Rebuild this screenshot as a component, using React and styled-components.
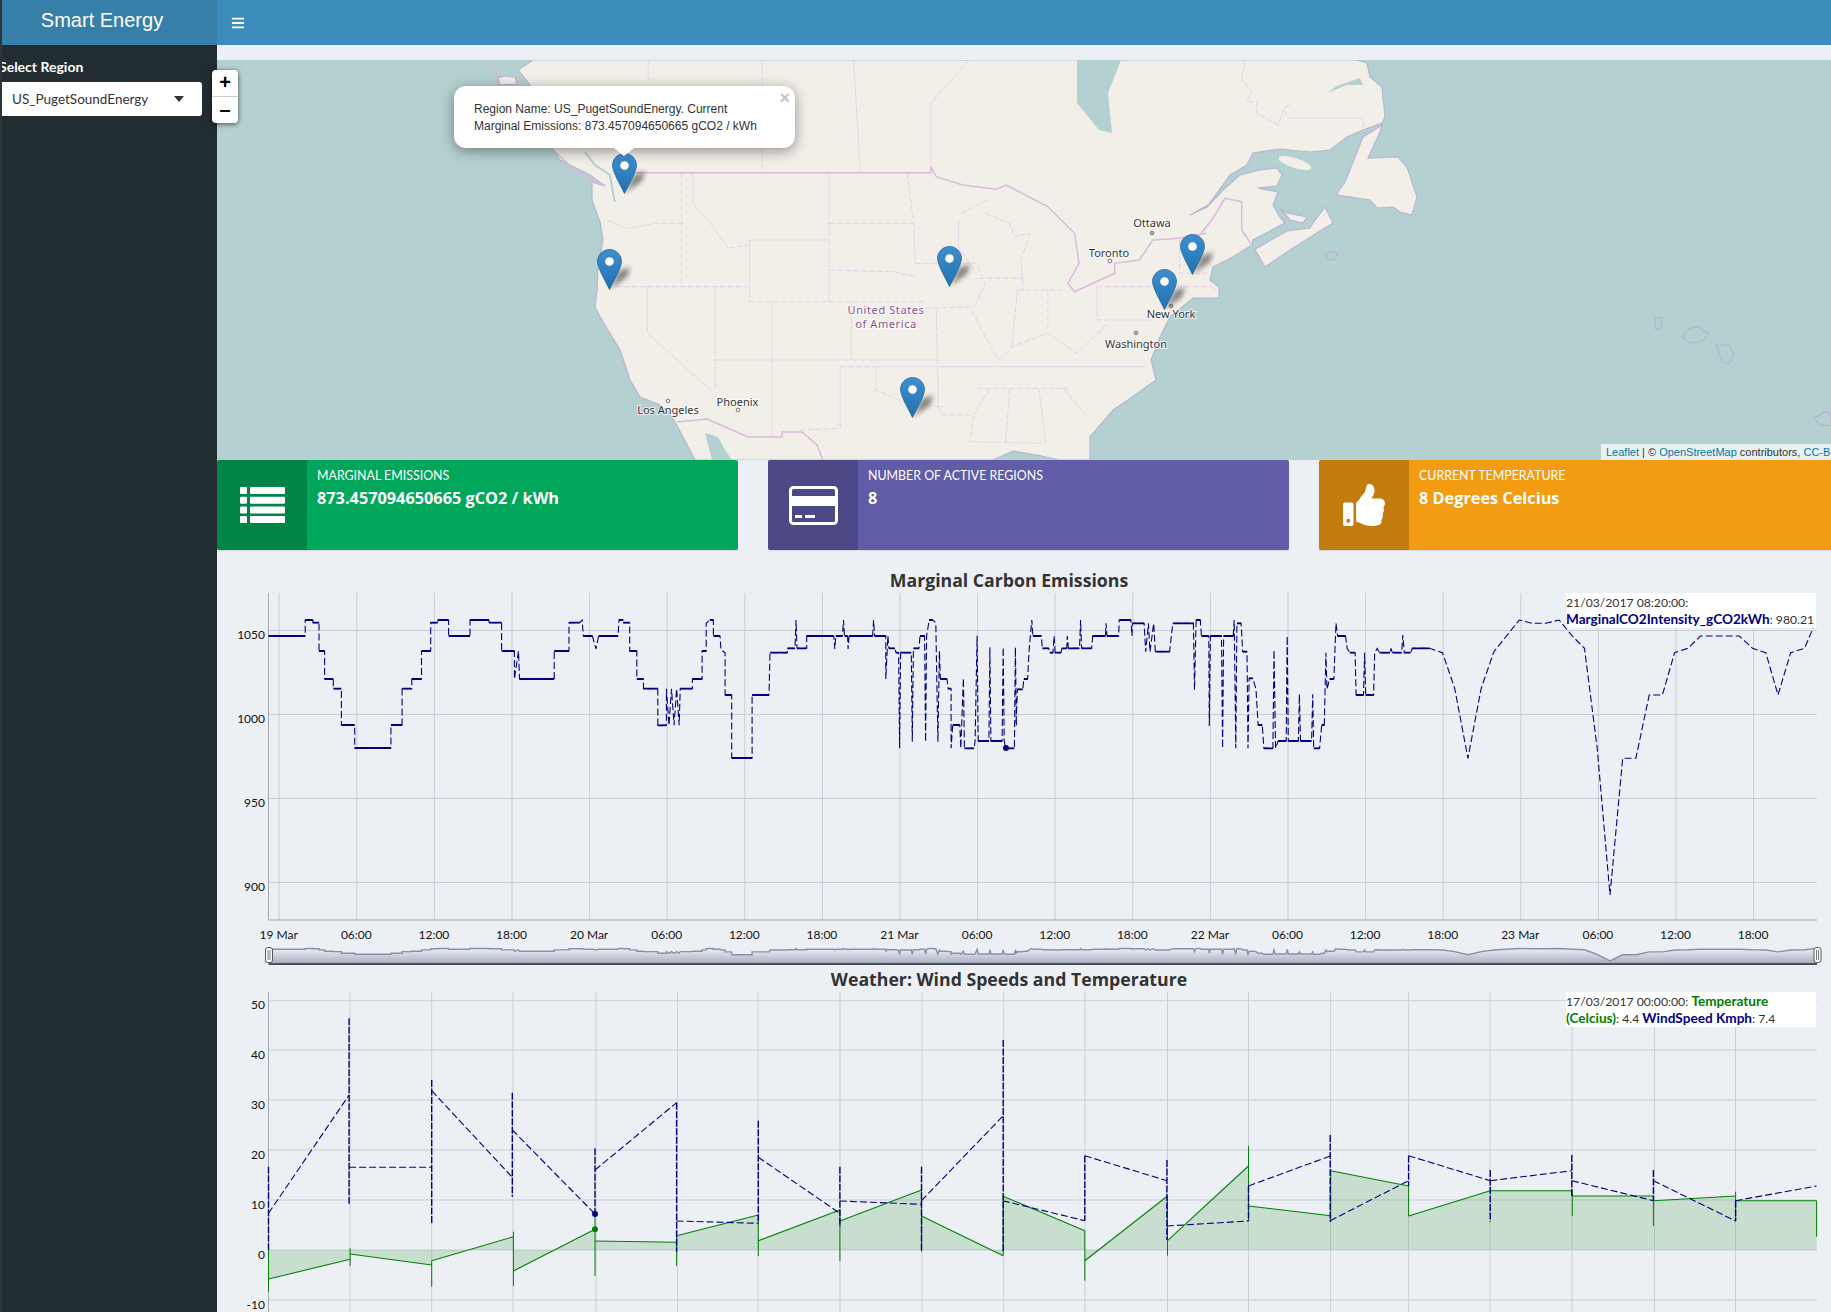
import React from 'react';
import styled, { createGlobalStyle } from 'styled-components';
import { FaBars, FaThumbsUp } from 'react-icons/fa';

const UI_FONT = '"Lato", "Noto Sans", sans-serif';
const HEAVY_FONT = '"Open Sans", "Lato", sans-serif';
const NAVY = '#000080';
const GREEN = '#008000';

// traced chart data, read off the screenshot in crop coordinates
const leftCrop = ([x, y]) => [220 + x / 1.96, 570 + y / 3];
const rightCrop = ([x, y]) => [1000 + x / 1.887, 600 + y / 3];
const weatherLeft = (x, y) => [220 + x / 1.96, 950 + y / 3];
const weatherRight = (x, y) => [1000 + x / 1.887, 950 + y / 3];
const mapCrop = ([x, y]) => [550 + x / 2.24, 60 + y / 3];
const eastCrop = ([x, y]) => [1100 + x / 2.145, 60 + y / 3];
const gulfCrop = ([x, y]) => [1190 + x / 3, 60 + y / 3];

const emissionsA = [[95,198],[167,198],[167,150],[182,150],[182,158],[194,158],[194,243],[205,243],[205,327],[222,327],[222,356],[238,356],[238,465],[264,465],[264,534],[335,534],[335,465],[357,465],[357,356],[376,356],[376,327],[395,327],[395,243],[413,243],[413,158],[427,158],[427,150],[448,150],[448,198],[490,198],[490,150],[527,150],[527,158],[552,158],[552,243],[577,243],[577,327],[585,243],[587,327],[655,327],[655,243],[684,243],[684,158],[705,158],[710,150],[712,198],[730,198],[737,237],[742,198],[780,198],[782,150],[790,150],[790,158],[803,158],[803,243],[817,243],[817,327],[830,327],[830,356],[858,356],[858,466],[875,466],[875,356],[880,466],[885,356],[890,466],[895,356],[900,466],[902,356],[926,356],[926,327],[945,327],[945,243],[953,243],[953,160],[960,150],[967,150],[967,198],[980,198],[982,240],[990,248],[990,375],[1003,375],[1003,564],[1043,564],[1043,375],[1076,375],[1078,248],[1112,248],[1112,235],[1127,235],[1129,150],[1131,235],[1150,235],[1150,198],[1203,198],[1205,237],[1207,198],[1220,198],[1222,150],[1224,198],[1230,198],[1231,237],[1233,198],[1279,198],[1281,150],[1283,198],[1305,198],[1305,327],[1309,198],[1311,235],[1323,235],[1325,248],[1330,248],[1332,535],[1334,248],[1355,248],[1357,515],[1359,235],[1370,235],[1372,198],[1381,198],[1383,515],[1385,198],[1390,150],[1397,150],[1403,158],[1407,515],[1410,243],[1412,327],[1425,327],[1427,356],[1433,356],[1433,535],[1436,465],[1450,465],[1452,535],[1457,325],[1459,535],[1478,535],[1480,513],[1484,197],[1486,513],[1507,513],[1509,232],[1511,513],[1533,513],[1535,232],[1537,513],[1540,535],[1557,535],[1559,232],[1561,465]];
const emissionsB = [[30,375],[33,268],[43,268],[45,237],[52,237],[55,150],[60,60],[62,108],[78,108],[80,145],[92,145],[94,158],[100,158],[102,108],[104,158],[115,158],[117,145],[126,145],[127,108],[129,145],[150,145],[152,60],[154,145],[173,145],[175,108],[199,108],[200,70],[202,108],[224,108],[225,60],[247,60],[249,108],[250,70],[272,70],[275,155],[280,70],[283,155],[290,70],[293,155],[320,155],[326,70],[365,70],[367,270],[370,60],[378,60],[380,108],[394,108],[395,378],[397,108],[418,108],[420,445],[422,108],[440,108],[442,60],[445,445],[447,70],[455,70],[458,155],[466,155],[468,445],[470,235],[477,235],[483,268],[487,375],[495,375],[498,445],[515,445],[517,150],[520,445],[525,423],[540,423],[542,108],[544,423],[563,423],[565,283],[567,423],[588,423],[590,283],[592,445],[603,445],[607,375],[612,375],[615,158],[617,268],[622,237],[630,237],[632,155],[634,70],[637,108],[652,108],[655,145],[660,158],[670,158],[672,285],[686,285],[688,158],[690,285],[705,285],[707,158],[712,145],[716,158],[736,158],[738,145],[740,158],[758,158],[760,105],[763,158],[775,158],[778,145],[810,145],[835,158],[858,265],[883,475],[908,265],[932,155],[980,60],[1004,70],[1030,70],[1055,60],[1080,108],[1103,145],[1127,445],[1151,885],[1175,475],[1200,475],[1225,285],[1250,285],[1273,158],[1298,145],[1322,108],[1395,108],[1420,145],[1445,158],[1468,285],[1492,158],[1518,145],[1541,60]];
const emissions = [...emissionsA.map(leftCrop), ...emissionsB.map(rightCrop)];

const toPath = (pts) => pts.map(([x, y], i) => `${i ? 'L' : 'M'}${x.toFixed(1)} ${y.toFixed(1)}`).join('');
const flatPath = emissions
  .map((p, i) => (i && p[1] === emissions[i - 1][1] && p[0] < 1450 ? `M${emissions[i - 1][0].toFixed(1)} ${p[1].toFixed(1)}L${p[0].toFixed(1)} ${p[1].toFixed(1)}` : ''))
  .join('');
const miniLine = emissions.map(([x, y]) => [x, 949 + (y - 630) * 0.045]);

const tempLeft = [[95,987,255,928],[255,912,415,945],[415,932,575,860],[575,963,735,838],[735,873,895,877],[895,857,1055,795],[1055,872,1215,780],[1215,813,1375,720],[1375,798,1535,917]];
const tempRight = [[5,738,160,842],[160,932,316,738],[316,872,469,648],[469,768,624,797],[624,662,771,708],[771,798,925,722],[925,722,1080,722],[1080,738,1233,738],[1233,752,1388,738],[1388,752,1541,752]];
const tempBarsLeft = [[95,901,1025],[255,895,948],[415,932,1010],[575,845,1008],[735,800,978],[895,860,948],[1055,795,918],[1215,780,933],[1375,720,905],[1535,738,917]];
const tempBarsRight = [[160,842,992],[316,738,917],[469,588,810],[624,662,815],[771,708,798],[1080,722,798],[1233,738,828],[1388,725,815],[1541,752,860]];
const windLeft = [[95,790,253,435],[253,652,415,652],[415,422,573,682],[573,540,735,792],[735,660,895,458],[895,813,1055,820],[1055,622,1215,790],[1215,753,1375,763],[1375,752,1535,497]];
const windRight = [[5,752,160,812],[160,617,315,692],[315,828,469,813],[469,708,623,618],[623,812,771,692],[771,617,925,692],[925,692,1079,662],[1079,692,1233,752],[1233,692,1388,813],[1388,752,1541,708]];
const windBarsLeft = [[95,650,900],[253,205,765],[415,390,820],[573,428,740],[735,595,792],[895,458,905],[1055,512,820],[1215,650,830],[1375,650,905],[1535,270,905]];
const windBarsRight = [[160,617,812],[315,630,870],[469,708,813],[623,555,815],[771,617,708],[925,660,815],[1079,615,738],[1233,660,752],[1388,752,813]];

const segments = (rows, conv) => rows.map(([a, b, c, d]) => [conv(a, b), conv(c, d)]);
const bars = (rows, conv) => rows.map(([x, a, b]) => [conv(x, a), conv(x, b)]);
const tempSegments = [...segments(tempLeft, weatherLeft), ...segments(tempRight, weatherRight)];
const windSegments = [...segments(windLeft, weatherLeft), ...segments(windRight, weatherRight)];
const tempBars = [...bars(tempBarsLeft, weatherLeft), ...bars(tempBarsRight, weatherRight)];
const windBars = [...bars(windBarsLeft, weatherLeft), ...bars(windBarsRight, weatherRight)];
const tempFill = tempSegments.map(([a, b]) => `M${a[0]} 1250L${a[0]} ${a[1]}L${b[0]} ${b[1]}L${b[0]} 1250Z`).join('');

const xLabels = ['19 Mar', '06:00', '12:00', '18:00', '20 Mar', '06:00', '12:00', '18:00', '21 Mar', '06:00', '12:00', '18:00', '22 Mar', '06:00', '12:00', '18:00', '23 Mar', '06:00', '12:00', '18:00'];
const weatherGrid = [350, 431.7, 513, 596, 677.6, 758, 840, 922, 1003.7, 1085, 1167.5, 1248.5, 1330.7, 1408.6, 1490, 1572, 1654.5, 1735.5];

// map geometry, page coordinates
const land = [[533,60],[518,70],[530,85],[540,120],[552,148],[560,160],[590,175],[605,186],[592,182],[592,200],[600,222],[603,240],[598,265],[597,290],[595,307],[603,322],[620,350],[630,380],[640,397],[660,405],[668,412],[675,422],[683,437],[695,460],[993,460],[1013,451],[1037,455],[1060,460],[1090,460],[1090,437],[1113,410],[1128,400],[1156,380],[1151,360],[1160,337],[1170,317],[1193,298],[1219,298],[1219,287],[1210,280],[1213,267],[1233,257],[1252,245],[1253,240],[1285,223],[1280,217],[1273,205],[1278,192],[1258,188],[1277,186],[1282,175],[1277,168],[1260,170],[1240,175],[1223,190],[1207,207],[1190,215],[1208,205],[1217,193],[1230,175],[1247,165],[1253,153],[1280,149],[1310,152],[1330,150],[1347,137],[1363,130],[1382,123],[1385,117],[1382,87],[1370,77],[1367,63],[1357,60]];
const newfoundland = [[1338,192],[1345,182],[1363,137],[1382,125],[1380,132],[1368,158],[1398,157],[1407,167],[1417,197],[1412,215],[1400,212],[1393,207],[1377,208],[1370,200],[1337,195]];
const novaScotia = [[1255,250],[1265,267],[1290,250],[1333,223],[1325,207],[1313,223],[1310,228],[1287,231],[1257,248]];
const princeEdward = [[1280,208],[1287,213],[1307,217],[1303,223],[1290,220]];
const smallIsland = [[498,78],[505,76],[515,77],[517,84],[500,85]];
const jamesBay = [[1077,60],[1121,60],[1108,93],[1112,133],[1099,130],[1077,103]];
const hamiltonInlet = [[1327,93],[1337,86],[1360,78],[1363,85],[1347,85]];
const californiaGulf = [[705,433],[718,437],[725,450],[732,460],[712,460]];
const georgiaStrait = [[585,152],[595,165],[610,175],[613,193],[615,202]];
const borders = [
  [[190,338],[853,338],[853,320],[865,350],[925,375],[1000,388],[1022,375],[1115,440],[1175,520],[1185,610],[1160,670],[1175,695],[1265,640],[1265,610],[1320,600],[1350,540],[1410,535],[1470,520]].map(mapCrop),
  [[677,422],[707,419],[748,437],[782,437],[782,432],[802,432],[817,445],[823,460]],
  [[30,525],[65,480],[105,415],[155,425],[155,510],[185,555]].map(gulfCrop),
  [[490,60],[490,67],[500,70],[495,80],[498,86]],
  [[553,150],[575,170],[605,186]],
];
const stateLines = [
  [[295,340],[295,680]],[[320,340],[320,430],[360,490],[385,540],[400,565],[445,555]],[[130,480],[170,505],[240,490],[300,490]],[[130,680],[445,680]],[[218,680],[218,820],[360,990]],[[370,680],[370,990]],[[497,725],[497,1130]],[[447,540],[625,540],[625,725],[447,725],[447,540]],[[625,340],[625,540]],[[625,490],[815,490]],[[800,340],[815,490],[818,610]],[[625,630],[770,635],[820,650]],[[625,725],[835,725]],[[675,725],[675,900]],[[370,900],[865,900]],[[650,920],[650,1105],[560,1110]],[[650,920],[730,920],[730,990],[800,1030],[880,1040]],[[730,920],[1340,920]],[[865,750],[870,1040],[880,1065],[950,1065]],[[818,610],[955,610],[975,670],[950,740],[840,745]],[[960,655],[1060,655]],[[915,480],[915,560],[955,640]],[[920,460],[980,420]],[[975,460],[1030,490],[1040,530],[1075,520],[1055,600],[1060,690]],[[1047,690],[1035,860]],[[945,750],[975,830],[1005,900]],[[1047,690],[1155,690]],[[1115,690],[1115,810]],[[1225,680],[1480,680]],[[1225,680],[1225,780],[1350,780]],[[1005,900],[1035,860],[1115,820],[1180,880],[1250,790]],[[955,985],[1160,985]],[[1030,985],[1020,1150]],[[1095,985],[1110,1150]],[[1150,985],[1210,1080]],[[945,1145],[1110,1150]],[[985,985],[950,1065],[940,1145]],[[220,0],[220,60]],[[475,0],[475,340]],[[680,0],[695,340]],[[940,0],[853,130],[853,320]],[[1410,540],[1410,640],[1470,640]],[[1480,680],[1490,690]],
].map((pts) => pts.map(mapCrop));
const quebecLines = [[[165,0],[155,60],[185,95],[170,125],[200,125],[200,160],[265,195],[280,150],[300,130],[280,150],[295,175],[520,175],[520,210]]].map((pts) => pts.map(gulfCrop));
const islands = [
  [[1190,775],[1205,772],[1205,800],[1192,808]],
  [[1248,830],[1265,805],[1280,800],[1305,820],[1295,840],[1265,850]],
  [[1322,855],[1350,855],[1360,885],[1348,912],[1335,905]],
  [[1532,1075],[1555,1055],[1568,1060],[1568,1098],[1545,1095]],
  [[484,585],[497,575],[510,578],[505,597],[490,600]],
];
const pins = [[624.5, 194], [609, 290], [949.5, 287], [912.5, 418], [1164, 310], [1192, 275]];
const cities = [
  { name: 'Ottawa', x: 1152, y: 227, dot: [1152, 233], ring: true },
  { name: 'Toronto', x: 1109, y: 257, dot: [1110, 261] },
  { name: 'New York', x: 1171, y: 318, dot: [1171, 306], ring: true },
  { name: 'Washington', x: 1136, y: 348, dot: [1136, 333], ring: true },
  { name: 'Phoenix', x: 737.5, y: 406, dot: [738, 410] },
  { name: 'Los Angeles', x: 668, y: 414, dot: [668, 401] },
];

const GlobalStyle = createGlobalStyle`
  html, body {
    margin: 0;
    height: 1312px;
    overflow: hidden;
    background: #ecf0f5;
    font-family: ${UI_FONT};
    color: #333;
  }
`;

const Page = styled.div`
  width: 1840px;
  height: 1312px;
  display: flex;
  flex-direction: column;
  overflow: hidden;
  border-left: 2px solid #2f3437;
  box-sizing: border-box;
`;

const TopBar = styled.header`
  height: 45px;
  flex: none;
  display: flex;
  background: #3c8dbc;
`;

const Logo = styled.div`
  width: 215px;
  padding-right: 15px;
  box-sizing: border-box;
  background: #367fa9;
  color: #fff;
  font: 20px/41px "Liberation Sans", Arial, sans-serif;
  text-align: center;
`;

const MenuToggle = styled.div`
  padding-left: 14px;
  display: flex;
  align-items: center;
  color: #fff;
  font-size: 14px;
`;

const Body = styled.div`
  flex: 1;
  display: flex;
  min-height: 0;
`;

const Sidebar = styled.aside`
  width: 215px;
  flex: none;
  background: #222d32;
  overflow: hidden;
  padding-top: 13px;
  box-sizing: border-box;
`;

const FieldLabel = styled.div`
  margin-left: -3px;
  color: #fff;
  font-size: 14px;
  font-weight: 700;
  line-height: 18px;
`;

const SelectBox = styled.div`
  width: 200px;
  height: 34px;
  margin-top: 6px;
  box-sizing: border-box;
  padding: 0 10px;
  display: flex;
  align-items: center;
  justify-content: space-between;
  background: #fff;
  border-radius: 0 3px 3px 0;
  color: #333;
  font-size: 13.5px;
`;

const Caret = styled.span`
  margin-right: 8px;
  border: 5px solid transparent;
  border-top: 6px solid #333;
  border-bottom: 0;
`;

const Content = styled.main`
  flex: 1;
  min-width: 0;
  padding-top: 15px;
`;

const MapPanel = styled.section`
  position: relative;
  height: 400px;
  background: #b5d0d0;
`;

const MapCanvas = styled.svg`
  display: block;
  width: 100%;
  height: 100%;
`;

const CityName = styled.text`
  font: 11px "Noto Sans", sans-serif;
  fill: #333;
  stroke: #fff;
  stroke-opacity: 0.75;
  stroke-width: 2px;
  paint-order: stroke;
  text-anchor: middle;
`;

const CountryName = styled(CityName)`
  fill: #8d4f8d;
  letter-spacing: 0.6px;
`;

const ZoomControl = styled.div`
  position: absolute;
  left: -5px;
  top: 10px;
  width: 26px;
  border-radius: 4px;
  background: #fff;
  box-shadow: 0 1px 5px rgba(0, 0, 0, 0.65);
  overflow: hidden;
`;

const ZoomButton = styled.div`
  height: 26px;
  text-align: center;
  font: bold 20px/25px "Liberation Sans", Arial, sans-serif;
  color: #000;
  & + & {
    border-top: 1px solid #ccc;
  }
`;

const Pin = styled.svg`
  position: absolute;
  left: ${(p) => p.$x - 12.5 - 217}px;
  top: ${(p) => p.$y - 41 - 60}px;
  width: 25px;
  height: 41px;
  overflow: visible;
`;

const Popup = styled.div`
  position: absolute;
  left: 237px;
  top: 26px;
  width: 341px;
  height: 62px;
  box-sizing: border-box;
  padding: 15px 20px;
  background: #fff;
  border-radius: 12px;
  box-shadow: 0 3px 14px rgba(0, 0, 0, 0.4);
  font: 12px/17px "Liberation Sans", Arial, sans-serif;
  color: #333;
  &::after {
    content: '';
    position: absolute;
    left: 160px;
    bottom: -8px;
    border: 10px solid transparent;
    border-top: 8px solid #fff;
    border-bottom: 0;
  }
`;

const PopupClose = styled.span`
  position: absolute;
  right: 5px;
  top: 2px;
  color: #c3c3c3;
  font: bold 18px/20px Tahoma, "Liberation Sans", sans-serif;
`;

const Attribution = styled.div`
  position: absolute;
  right: -20px;
  bottom: 0;
  padding: 0 5px;
  background: rgba(255, 255, 255, 0.7);
  font: 11px/16px "Liberation Sans", Arial, sans-serif;
  color: #333;
  a {
    color: #0078a8;
    text-decoration: none;
  }
`;

const InfoRow = styled.section`
  display: flex;
  gap: 30px;
`;

const InfoBox = styled.div`
  width: 521px;
  height: 90px;
  display: flex;
  color: #fff;
  background: ${(p) => p.$color};
  border-radius: 2px;
  box-shadow: 0 1px 1px rgba(0, 0, 0, 0.1);
`;

const InfoIcon = styled.div`
  width: 90px;
  flex: none;
  display: flex;
  align-items: center;
  justify-content: center;
  background: rgba(0, 0, 0, 0.2);
  border-radius: 2px 0 0 2px;
  font-size: 42px;
  svg {
    display: block;
  }
`;

const InfoText = styled.div`
  padding: 6px 10px;
`;

const InfoLabel = styled.div`
  font-size: 12.4px;
  line-height: 20px;
  text-transform: uppercase;
`;

const InfoValue = styled.div`
  font-family: ${HEAVY_FONT};
  font-size: 16.3px;
  font-weight: 700;
  line-height: 25px;
`;

const ChartBlock = styled.section`
  position: relative;
`;

const ChartTitle = styled.h2`
  width: 1584px;
  margin: 0;
  padding-top: ${(p) => p.$top}px;
  text-align: center;
  font-family: ${HEAVY_FONT};
  font-size: 17.7px;
  font-weight: 700;
  line-height: ${(p) => p.$line}px;
  color: #333;
`;

const ChartCanvas = styled.svg`
  display: block;
  width: 1623px;
  height: ${(p) => p.$height}px;
`;

const TickLabel = styled.text`
  font: 12px ${UI_FONT};
  fill: #111;
  text-anchor: ${(p) => p.$anchor || 'middle'};
`;

const Legend = styled.div`
  position: absolute;
  left: 1349px;
  top: ${(p) => p.$top}px;
  width: 250px;
  height: 35px;
  overflow: hidden;
  box-sizing: border-box;
  padding-top: 1px;
  background: #fff;
  font-size: 12.2px;
  line-height: 17px;
  color: #333;
`;

const Series = styled.b`
  color: ${(p) => p.$color};
  font-size: 13.6px;
`;

const ListIcon = () => (
  <svg width="45" height="36" viewBox="0 0 45 36" fill="#fff">
    {[0, 9.7, 19.4, 29].map((y) => (
      <g key={y}>
        <rect x="0" y={y} width="7" height="7" rx="1" />
        <rect x="10" y={y} width="35" height="7" rx="1" />
      </g>
    ))}
  </svg>
);

const CardIcon = () => (
  <svg width="49" height="39" viewBox="0 0 49 39" fill="#fff">
    <rect x="1.5" y="1.5" width="46" height="36" rx="3" fill="none" stroke="#fff" strokeWidth="3" />
    <rect x="2" y="10" width="45" height="10" />
    <rect x="6" y="29" width="7" height="3" />
    <rect x="16" y="29" width="10" height="3" />
  </svg>
);

const MapPin = ({ x, y }) => (
  <Pin $x={x} $y={y} viewBox="0 0 25 41">
    <defs>
      <linearGradient id="pinFill" x1="0" y1="0" x2="0" y2="1">
        <stop offset="0" stopColor="#3f8fce" />
        <stop offset="1" stopColor="#2170b0" />
      </linearGradient>
      <filter id="pinShadow" x="-60%" y="-60%" width="220%" height="220%">
        <feGaussianBlur stdDeviation="2.5" />
      </filter>
    </defs>
    <path d="M13 40L22 22L33 18L30 28Z" fill="#000" opacity="0.45" filter="url(#pinShadow)" />
    <path
      d="M12.5 .5C5.9 .5 .5 5.9 .5 12.5C.5 19 9 33 12.5 40.5C16 33 24.5 19 24.5 12.5C24.5 5.9 19.1 .5 12.5 .5Z"
      fill="url(#pinFill)"
      stroke="#2a6a9c"
      strokeWidth="0.8"
    />
    <circle cx="12.5" cy="12.5" r="4.3" fill="#fff" />
  </Pin>
);

const MapDrawing = () => (
  <MapCanvas viewBox="217 60 1623 400">
    <path d={`${toPath(land)}Z`} fill="#f2efe9" stroke="#b4b7d0" strokeWidth="1.2" />
    {[newfoundland, novaScotia, princeEdward, smallIsland].map((pts, i) => (
      <path key={i} d={`${toPath(pts)}Z`} fill="#f2efe9" stroke="#bcb4d4" strokeWidth="1.2" />
    ))}
    <ellipse cx="1295" cy="163" rx="17" ry="5" transform="rotate(18 1295 163)" fill="#f2efe9" />
    {[jamesBay, hamiltonInlet, californiaGulf].map((pts, i) => (
      <path key={i} d={`${toPath(pts)}Z`} fill="#b5d0d0" />
    ))}
    <path d={toPath(georgiaStrait)} fill="none" stroke="#b5d0d0" strokeWidth="2" />
    {islands.map((pts, i) => (
      <path key={i} d={`${toPath(pts.map(eastCrop))}Z`} fill="#b5d0d0" stroke="#b9b3d2" strokeWidth="1.2" />
    ))}
    {[...stateLines, ...quebecLines].map((pts, i) => (
      <path key={i} d={toPath(pts)} fill="none" stroke="#e8cfe8" strokeWidth="1" strokeDasharray="6 2" />
    ))}
    {borders.map((pts, i) => (
      <path key={i} d={toPath(pts)} fill="none" stroke="#dcb9dc" strokeWidth="1.5" />
    ))}
    {cities.map((c) => (
      <g key={c.name}>
        <circle cx={c.dot[0]} cy={c.dot[1]} r="1.8" fill="#fff" stroke="#555" strokeWidth="0.8" />
        {c.ring && <circle cx={c.dot[0]} cy={c.dot[1]} r="0.7" fill="#333" />}
        <CityName x={c.x} y={c.y}>{c.name}</CityName>
      </g>
    ))}
    <CountryName x="886" y="314">United States</CountryName>
    <CountryName x="886" y="328">of America</CountryName>
  </MapCanvas>
);

const EmissionsChart = () => (
  <ChartCanvas $height={378} viewBox="217 590 1623 378">
    <defs>
      <linearGradient id="rangeFill" x1="0" y1="0" x2="0" y2="1">
        <stop offset="0" stopColor="#ecf0f5" />
        <stop offset="1" stopColor="#aab0c2" />
      </linearGradient>
    </defs>
    {[630.5, 714.5, 798.5, 882.5].map((y) => (
      <line key={y} x1="268.5" x2="1817" y1={y} y2={y} stroke="#c9ced6" />
    ))}
    {xLabels.map((label, i) => (
      <line key={i} x1={279.2 + i * 77.6} x2={279.2 + i * 77.6} y1="593" y2="920" stroke="#c9ced6" />
    ))}
    <path d="M268.5 593V920H1817" fill="none" stroke="#a5a9b1" />
    <path d={toPath(emissions)} fill="none" stroke={NAVY} strokeWidth="1.1" strokeDasharray="7 3" />
    <path d={flatPath} fill="none" stroke={NAVY} strokeWidth="1.8" />
    <circle cx="1006" cy="748" r="3" fill={NAVY} />
    {[['1050', 638.5], ['1000', 722.5], ['950', 806.5], ['900', 890.5]].map(([label, y]) => (
      <TickLabel key={label} x="265" y={y} $anchor="end">{label}</TickLabel>
    ))}
    {xLabels.map((label, i) => (
      <TickLabel key={i} x={278.7 + i * 77.6} y="939">{label}</TickLabel>
    ))}
    <path d={`${toPath(miniLine)}L1817 963L268.5 963Z`} fill="url(#rangeFill)" />
    <path d={toPath(miniLine)} fill="none" stroke="#8591ab" strokeWidth="1.4" />
    <rect x="268.5" y="963" width="1548.5" height="2" fill="#4a4f5a" />
    {[265, 1813.5].map((x) => (
      <g key={x}>
        <rect x={x + 0.5} y="947.5" width="7" height="15" rx="2.5" fill="#fff" stroke="#555" />
        <path d={`M${x + 3} 950V960M${x + 5} 950V960`} stroke="#777" />
      </g>
    ))}
  </ChartCanvas>
);

const WeatherChart = () => (
  <ChartCanvas $height={322} viewBox="217 990 1623 322">
    {[1000.7, 1050, 1100, 1150, 1200, 1250, 1300].map((y) => (
      <line key={y} x1="268.5" x2="1817" y1={y} y2={y} stroke="#c9ced6" />
    ))}
    {weatherGrid.map((x) => (
      <line key={x} x1={x} x2={x} y1="992" y2="1312" stroke="#c9ced6" />
    ))}
    <line x1="268.5" x2="268.5" y1="992" y2="1312" stroke="#a5a9b1" />
    <path d={tempFill} fill={GREEN} opacity="0.15" />
    {tempSegments.map((s, i) => (
      <path key={i} d={toPath(s)} stroke={GREEN} strokeWidth="1.1" fill="none" />
    ))}
    {tempBars.map((s, i) => (
      <path key={i} d={toPath(s)} stroke={GREEN} strokeWidth="1" fill="none" />
    ))}
    {windSegments.map((s, i) => (
      <path key={i} d={toPath(s)} stroke={NAVY} strokeWidth="1.1" strokeDasharray="7 3" fill="none" />
    ))}
    {windBars.map((s, i) => (
      <path key={i} d={toPath(s)} stroke={NAVY} strokeWidth="1.4" strokeDasharray="7 1.5" fill="none" />
    ))}
    <circle cx="595" cy="1214" r="3" fill={NAVY} />
    <circle cx="595" cy="1229.3" r="3" fill={GREEN} />
    {[['50', 1008.5], ['40', 1058.5], ['30', 1108.5], ['20', 1158.5], ['10', 1208.5], ['0', 1258.5], ['-10', 1308.5]].map(([label, y]) => (
      <TickLabel key={label} x="265" y={y} $anchor="end">{label}</TickLabel>
    ))}
  </ChartCanvas>
);

export default function App() {
  return (
    <Page>
      <GlobalStyle />
      <TopBar>
        <Logo>Smart Energy</Logo>
        <MenuToggle><FaBars /></MenuToggle>
      </TopBar>
      <Body>
        <Sidebar>
          <FieldLabel>Select Region</FieldLabel>
          <SelectBox>US_PugetSoundEnergy<Caret /></SelectBox>
        </Sidebar>
        <Content>
          <MapPanel>
            <MapDrawing />
            {pins.map(([x, y]) => <MapPin key={x} x={x} y={y} />)}
            <ZoomControl>
              <ZoomButton>+</ZoomButton>
              <ZoomButton>–</ZoomButton>
            </ZoomControl>
            <Popup>
              Region Name: US_PugetSoundEnergy. Current<br />
              Marginal Emissions: 873.457094650665 gCO2 / kWh
              <PopupClose>×</PopupClose>
            </Popup>
            <Attribution>
              <a href="#leaflet">Leaflet</a> | © <a href="#osm">OpenStreetMap</a> contributors, <a href="#cc">CC-BY-SA</a>
            </Attribution>
          </MapPanel>
          <InfoRow>
            <InfoBox $color="#00a65a">
              <InfoIcon><ListIcon /></InfoIcon>
              <InfoText>
                <InfoLabel>Marginal Emissions</InfoLabel>
                <InfoValue>873.457094650665 gCO2 / kWh</InfoValue>
              </InfoText>
            </InfoBox>
            <InfoBox $color="#605ca8">
              <InfoIcon><CardIcon /></InfoIcon>
              <InfoText>
                <InfoLabel>Number of Active Regions</InfoLabel>
                <InfoValue>8</InfoValue>
              </InfoText>
            </InfoBox>
            <InfoBox $color="#f39c12">
              <InfoIcon><FaThumbsUp /></InfoIcon>
              <InfoText>
                <InfoLabel>Current Temperature</InfoLabel>
                <InfoValue>8 Degrees Celcius</InfoValue>
              </InfoText>
            </InfoBox>
          </InfoRow>
          <ChartBlock>
            <ChartTitle $top={20} $line={20}>Marginal Carbon Emissions</ChartTitle>
            <EmissionsChart />
            <Legend $top={43}>
              21/03/2017 08:20:00:<br />
              <Series $color={NAVY}>MarginalCO2Intensity_gCO2kWh</Series>: 980.21
            </Legend>
          </ChartBlock>
          <ChartBlock>
            <ChartTitle $top={0} $line={22}>Weather: Wind Speeds and Temperature</ChartTitle>
            <WeatherChart />
            <Legend $top={24}>
              17/03/2017 00:00:00: <Series $color={GREEN}>Temperature (Celcius)</Series>: 4.4{' '}
              <Series $color={NAVY}>WindSpeed Kmph</Series>: 7.4
            </Legend>
          </ChartBlock>
        </Content>
      </Body>
    </Page>
  );
}
